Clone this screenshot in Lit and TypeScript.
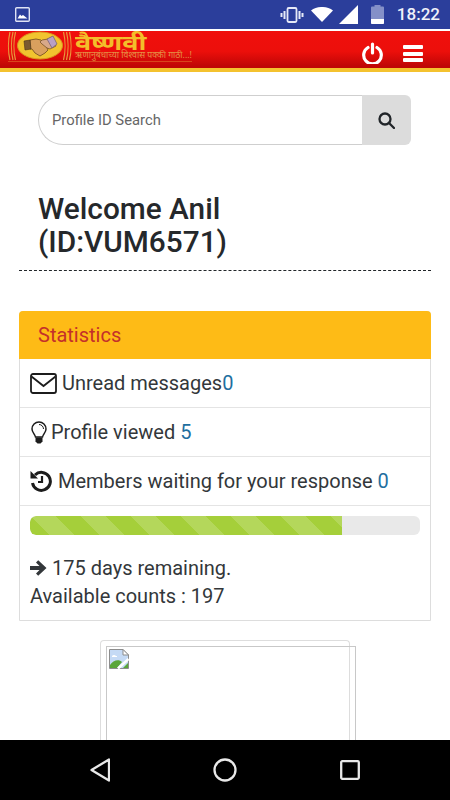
import { LitElement, html, css } from "lit";
import { customElement } from "lit/decorators.js";

@customElement("app-root")
export class AppRoot extends LitElement {
  static styles = css`
    :host { display: block; width: 450px; height: 800px; overflow: hidden; background: #fff; font-family: Roboto, "Noto Sans", sans-serif; color: #212529; }
    .screen { display: flex; flex-direction: column; height: 800px; }
    .status { flex: none; height: 29px; background: #2b3e9b; display: flex; align-items: center; color: #fff; padding: 0 10px 0 15px; }
    .status svg { display: block; }
    .vib { margin-right: 7px; }
    .wifi { margin-right: 6px; }
    .sig { margin-right: 13px; }
    .batt { margin-right: 13px; }
    .time { font-size: 17px; font-weight: 500; color: #f0f2fa; line-height: 29px; }
    .top { flex: none; height: 41px; margin-top: 2px; background: linear-gradient(#f00f0c 0, #ec0f0b 55%, #bf0606 95%); border-bottom: 4px solid #f4c22f; display: flex; align-items: flex-start; box-sizing: border-box; padding-right: 27px; }
    .logo { display: flex; flex-direction: column; padding-left: 6px; }
    .logo-row { display: flex; height: 30px; }
    .logo-line { height: 1px; width: 184px; margin-left: 2px; background: #d8461c; }
    .wordmark { display: flex; flex-direction: column; margin-left: 3px; }
    .wm1 { font-family: "Noto Sans", "DejaVu Sans", serif; font-style: italic; font-weight: 700; color: #f3be2a; font-size: 27px; line-height: 17px; height: 17px; margin-top: 3px; transform: scaleY(.76); }
    .wm2 { font-family: "Noto Sans", "DejaVu Sans", serif; color: #e58f45; font-size: 8.7px; line-height: 9px; white-space: nowrap; }
    .spacer { flex: 1; }
    .power { margin: 11px 20px 0 0; display: block; }
    .burger { display: flex; flex-direction: column; gap: 2.5px; width: 20px; margin-top: 14px; }
    .burger i { display: block; height: 4px; background: #fff; border-radius: 1px; }
    main { flex: 1; min-height: 0; overflow: hidden; padding: 23px 19px 0; display: flex; flex-direction: column; }
    .search { display: flex; height: 50px; margin: 0 20px 0 19px; flex: none; }
    .input { flex: 1; box-sizing: border-box; border: 1px solid #cfcfcf; border-right: 0; border-radius: 25px 0 0 25px; padding-left: 13px; display: flex; align-items: center; font-size: 14.8px; color: #666; }
    .btn { width: 49px; background: #dcdcdc; border-radius: 0 6px 6px 0; display: flex; align-items: center; justify-content: center; }
    h1 { margin: 47px 0 0 19px; font-size: 29.8px; line-height: 33px; font-weight: 500; color: #25282b; }
    .rule { border-bottom: 1px dashed #212529; margin-top: 12px; flex: none; }
    .panel { margin-top: 40px; border: 1px solid #ddd; border-radius: 4px 4px 0 0; flex: none; }
    .phead { background: #febb16; margin: -1px -1px 0; height: 48px; border-radius: 4px 4px 0 0; display: flex; align-items: center; padding-left: 19px; font-size: 20px; color: #c4302a; }
    .row { height: 49px; box-sizing: border-box; border-bottom: 1px solid #e4e4e4; display: flex; align-items: center; padding-left: 10px; font-size: 20px; color: #33373a; white-space: pre; }
    .row svg { flex: none; display: block; }
    .mail { margin-right: 5px; }
    .bulb { margin: 0 4px 0 1px; }
    .hist { margin-right: 6px; }
    .num { color: #1f6f9f; }
    .body { padding: 10px 10px 0; height: 114px; box-sizing: border-box; }
    .track { height: 19px; background: #e9e9e9; border-radius: 6px; overflow: hidden; }
    .fill { height: 100%; border-radius: 6px 0 0 6px; background-color: #a5cf3a; background-image: linear-gradient(45deg, rgba(255,255,255,.17) 25%, transparent 25%, transparent 50%, rgba(255,255,255,.17) 50%, rgba(255,255,255,.17) 75%, transparent 75%, transparent); background-size: 50px 50px; background-position: 1px 0; }
    .line { font-size: 20px; line-height: 28px; color: #33373a; display: flex; align-items: center; white-space: pre; }
    .line svg { margin-right: 5px; }
    .first { margin-top: 19px; }
    .thumb { margin: 19px 0 0 81px; width: 250px; height: 120px; box-sizing: border-box; border: 1px solid #ddd; border-bottom: 0; border-radius: 4px 4px 0 0; flex: none; padding: 5px 0 0 5px; }
    .img { width: 250px; height: 100px; box-sizing: border-box; border: 1px solid #c8c8c8; border-bottom: 0; padding: 2px; }
    .img svg { display: block; }
    .nav { flex: none; height: 60px; background: #000; display: flex; align-items: center; justify-content: space-between; padding: 0 90px; }
    .nav svg { display: block; }
  `;

  render() {
    return html`<div class="screen">
      <div class="status">
        <svg width="15" height="15" viewBox="0 0 15 15"><rect x=".7" y=".7" width="13.6" height="13.6" rx="1" fill="#2b3e9b" stroke="#dfe3f5" stroke-width="1.4"/><path d="M2.500 11.500 L5 7.500 l1.500 1.500 1.500-1 L12.500 11.500z" fill="#fff"/></svg>
        <div class="spacer"></div>
        <svg class="vib" width="24" height="16" viewBox="0 0 24 16" fill="none" stroke="#e6e9f7"><rect x="7.500" y="1" width="9" height="14" rx="1.200" stroke-width="1.800"/><path d="M4.500 4v8M19.500 4v8" stroke-width="2"/><path d="M1.500 6v4M22.500 6v4" stroke-width="2"/></svg>
        <svg class="wifi" width="22" height="15" viewBox="0 0 22 15"><path d="M0 3.500C6-1.200 16-1.200 22 3.500L11 15z" fill="#fff"/></svg>
        <svg class="sig" width="19" height="19" viewBox="0 0 19 19"><path d="M0 19 19 0v19z" fill="#fff"/></svg>
        <svg class="batt" width="13" height="19" viewBox="0 0 13 19"><path d="M3.500 0h6v1.500H12a1 1 0 0 1 1 1V18a1 1 0 0 1-1 1H1a1 1 0 0 1-1-1V2.500a1 1 0 0 1 1-1h2.500z" fill="#8490c8"/><path d="M0 14h13v4a1 1 0 0 1-1 1H1a1 1 0 0 1-1-1z" fill="#fff"/></svg>
        <span class="time">18:22</span>
      </div>
      <div class="top">
        <div class="logo">
          <div class="logo-row">
            <svg width="66" height="30" viewBox="0 0 66 30">
              <g fill="none" stroke="#e99a3c" stroke-width="1.200"><path d="M4 1C2 9 2 21 4 29M7 1C5 9 5 21 7 29M9.500 1C7.500 9 7.500 21 9.500 29M57.500 1c2 8 2 20 0 28M60.500 1c2 8 2 20 0 28M63.500 1c2 8 2 20 0 28"/></g>
              <ellipse cx="34" cy="14.500" rx="22.500" ry="13.500" fill="#f1c42f" stroke="#d9981f"/>
              <path d="M24 9l6-1 5 1 5 6 2 4-3 3-5 3-5-3-3-4-2 0z" fill="#d9a05e" stroke="#6d4a20" stroke-width=".8"/>
              <path d="M36 9l6-1 4-2 4 9-6 3-3-1-5-4-2-2z" fill="#d8a889" stroke="#6d4a20" stroke-width=".7"/>
              <path d="M18 10l6-1 1 9-6 1z" fill="#7a5a30" stroke="#4a3418" stroke-width=".6"/>
              <path d="M41 8l6-3 4 8-5 4z" fill="#b9a0c4" stroke="#6d5a70" stroke-width=".7"/>
            </svg>
            <div class="wordmark">
              <span class="wm1">वैष्णवी</span>
              <span class="wm2">ऋणानुबंधाच्या विश्वास पक्की गाठी...!</span>
            </div>
          </div>
          <div class="logo-line"></div>
        </div>
        <div class="spacer"></div>
        <svg class="power" width="21" height="22" viewBox="0 0 21 22" fill="none" stroke="#fff" stroke-width="3.200" stroke-linecap="round"><path d="M6 5.500a8.800 8.800 0 1 0 9 0"/><path d="M10.500 2v9"/></svg>
        <div class="burger"><i></i><i></i><i></i></div>
      </div>
      <main>
        <div class="search">
          <div class="input">Profile ID Search</div>
          <div class="btn"><svg width="17" height="17" viewBox="0 0 17 17" fill="none" stroke="#212529" stroke-width="2.300"><circle cx="7" cy="7" r="5.500"/><path d="M11 11l5 5" stroke-linecap="round"/></svg></div>
        </div>
        <h1>Welcome Anil<br />(ID:VUM6571)</h1>
        <div class="rule"></div>
        <div class="panel">
          <div class="phead">Statistics</div>
          <div class="row"><svg class="mail" width="27" height="21" viewBox="0 0 27 21" fill="none" stroke="#1c1c1c" stroke-width="1.800"><rect x="1" y="1" width="25" height="19" rx="2"/><path d="M1.500 3.500 13.500 13 25.500 3.500"/></svg><span>Unread messages<span class="num">0</span></span></div>
          <div class="row"><svg class="bulb" width="16" height="23" viewBox="0 0 16 23"><path d="M8 1a7 7 0 0 0-7 7c0 3.500 3 5 3.500 8h7c.5-3 3.500-4.500 3.500-8a7 7 0 0 0-7-7z" fill="none" stroke="#1c1c1c" stroke-width="1.500"/><path d="M8 3.500a4.500 4.500 0 0 1 4.500 4.500" fill="none" stroke="#1c1c1c"/><path d="M4.500 16.500h7v4l-2 2h-3l-2-2z" fill="#1c1c1c"/></svg><span>Profile viewed <span class="num">5</span></span></div>
          <div class="row"><svg class="hist" width="22" height="22" viewBox="0 0 22 22" fill="none" stroke="#1c1c1c" stroke-width="3"><path d="M5 5A9 9 0 1 1 2.500 13"/><path d="M12 6v6H8" stroke-width="2.200"/><path d="M.5 1l7.500 7.500H.5z" fill="#1c1c1c" stroke="none"/></svg><span>Members waiting for your response <span class="num">0</span></span></div>
          <div class="body">
            <div class="track"><div class="fill" style="width:80%"></div></div>
            <div class="line first"><svg width="17" height="16" viewBox="0 0 17 16"><path d="M0 6h9.500L6 2.500 8.200.3 16.500 8l-8.300 7.700L6 13.500 9.500 10H0z" fill="#33373a"/></svg><span>175 days remaining.</span></div>
            <div class="line">Available counts : 197</div>
          </div>
        </div>
        <div class="thumb">
          <div class="img"><svg width="20" height="20" viewBox="0 0 20 20"><path d="M.5.500H14L19.500 6v13.500H.5z" fill="#c5daf5" stroke="#8d8d8d"/><path d="M3 7c1-1.500 3-1.500 4 0h1v1H3z" fill="#fff"/><path d="M1 19v-3c3-5 9-6 12-3l-5 6z" fill="#5aa63a"/><path d="M14 19l5-5v5z" fill="#5aa63a"/><path d="M14 .5V6h5.500z" fill="#fff" stroke="#8d8d8d"/><path d="M9 19.500 19.500 10" stroke="#fff" stroke-width="2.500"/></svg></div>
        </div>
      </main>
      <div class="nav">
        <svg width="20" height="24" viewBox="0 0 20 24" fill="none" stroke="#e9e9e9" stroke-width="2.300" stroke-linejoin="round"><path d="M19 1.500v21L1.500 12z"/></svg>
        <svg width="24" height="24" viewBox="0 0 24 24" fill="none" stroke="#e9e9e9" stroke-width="2.300"><circle cx="12" cy="12" r="10.500"/></svg>
        <svg width="20" height="20" viewBox="0 0 20 20" fill="none" stroke="#e9e9e9" stroke-width="2.300"><rect x="1.200" y="1.200" width="17.600" height="17.600" rx="1"/></svg>
      </div>
    </div>`;
  }
}
